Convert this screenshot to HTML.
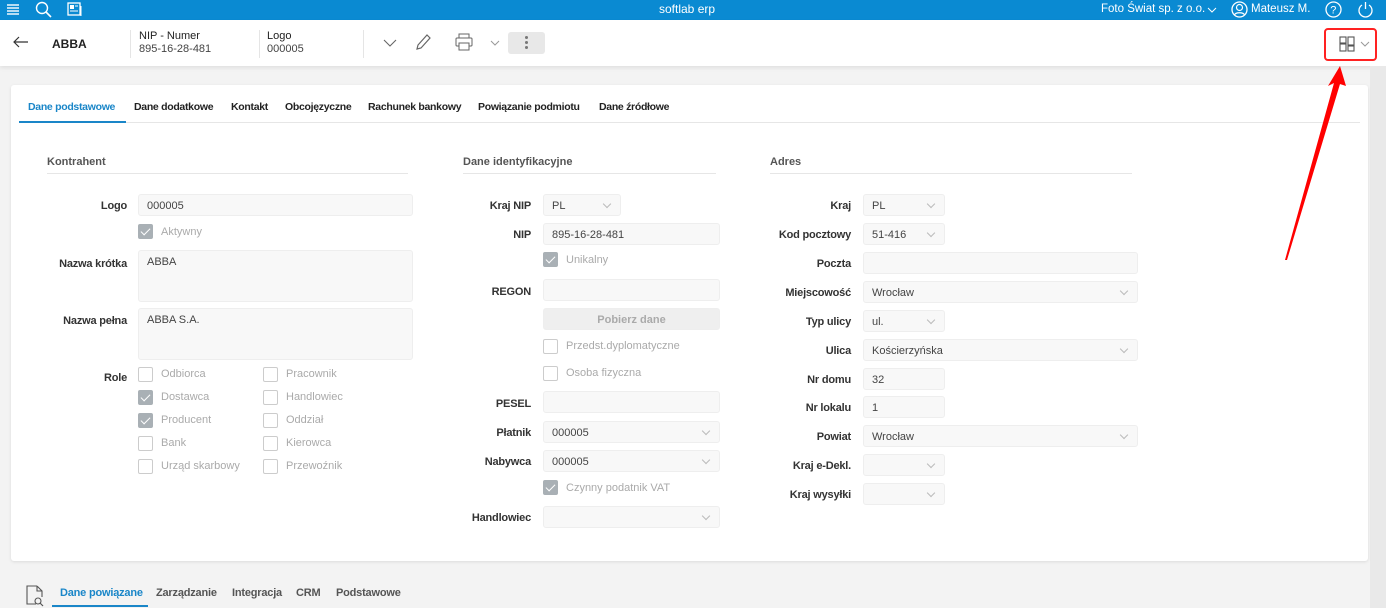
<!DOCTYPE html>
<html><head><meta charset="utf-8"><style>
*{box-sizing:border-box;margin:0;padding:0}
body{width:1386px;height:608px;overflow:hidden;background:#f3f3f3;font-family:"Liberation Sans",sans-serif;position:relative;color:#222}
.a{position:absolute}
.top{left:0;top:0;width:1386px;height:20px;background:#0a8ad2;color:#fff;font-size:12px}
.hdr{left:0;top:20px;width:1386px;height:46px;background:#fff;box-shadow:0 2px 4px rgba(0,0,0,.08)}
.card{left:11px;top:85px;width:1357px;height:476px;background:#fff;border-radius:3px;box-shadow:0 1px 3px rgba(0,0,0,.1)}
.lbl{font-size:11px;font-weight:bold;color:#333;text-align:right;width:120px;letter-spacing:-0.2px}
.in{height:22px;background:#f8f8f8;border:1px solid #eee;border-radius:3px;font-size:11px;color:#444;padding:5px 0 0 8px}
.dd:after{content:"";position:absolute;right:10px;top:6px;width:5px;height:5px;border-right:1px solid #bbb;border-bottom:1px solid #bbb;transform:rotate(45deg)}
.cb{width:15px;height:15px;border:1px solid #ccc;border-radius:2px;background:#fff}
.cb.on{background:#a9b0b5;border-color:#a9b0b5}
.cb.on:after{content:"";position:absolute;left:4px;top:1px;width:4px;height:8px;border-right:1.5px solid #fff;border-bottom:1.5px solid #fff;transform:rotate(45deg)}
.ct{font-size:11px;color:#aaa}
.sec{font-size:11px;font-weight:bold;color:#555}
.line{height:1px;background:#e6e6e6}
.tab{font-size:10.5px;font-weight:bold;color:#222;top:101px;letter-spacing:-0.3px}
.bt{font-size:11px;font-weight:bold;color:#555;top:587px;letter-spacing:-0.2px}
</style></head><body>
<div class="a top">
 <svg class="a" style="left:7px;top:3px" width="12" height="13"><g stroke="#fff" stroke-width="1.4"><line x1="0" y1="2" x2="12" y2="2"/><line x1="0" y1="5" x2="12" y2="5"/><line x1="0" y1="8" x2="12" y2="8"/><line x1="0" y1="11" x2="12" y2="11"/></g></svg>
 <svg class="a" style="left:35px;top:1px" width="18" height="18"><circle cx="7" cy="7" r="5.5" fill="none" stroke="#fff" stroke-width="1.4"/><line x1="11" y1="11" x2="16" y2="16" stroke="#fff" stroke-width="1.6"/></svg>
 <svg class="a" style="left:67px;top:2px" width="16" height="15"><rect x="1" y="1" width="12" height="12" fill="none" stroke="#fff" stroke-width="1.3"/><rect x="3" y="3" width="4" height="4" fill="#fff"/><g stroke="#fff"><line x1="8" y1="4" x2="11" y2="4"/><line x1="3" y1="9" x2="11" y2="9"/><line x1="14" y1="4" x2="14" y2="14"/></g></svg>
 <div class="a" style="left:659px;top:2px">softlab erp</div>
 <div class="a" style="left:1101px;top:3px;font-size:11.5px">Foto Świat sp. z o.o.</div>
 <svg class="a" style="left:1207px;top:7px" width="10" height="6"><path d="M1 1l4 4 4-4" fill="none" stroke="#fff"/></svg>
 <svg class="a" style="left:1231px;top:1px" width="17" height="17"><circle cx="8.5" cy="8.5" r="7.5" fill="none" stroke="#fff" stroke-width="1.3"/><circle cx="8.5" cy="6.5" r="3" fill="none" stroke="#fff" stroke-width="1.2"/><path d="M3.5 14c1-3 9-3 10 0" fill="none" stroke="#fff" stroke-width="1.2"/></svg>
 <div class="a" style="left:1251px;top:3px;font-size:11.5px">Mateusz M.</div>
 <svg class="a" style="left:1325px;top:1px" width="17" height="17"><circle cx="8.5" cy="8.5" r="7.5" fill="none" stroke="#fff" stroke-width="1.3"/><text x="5.3" y="12.5" font-size="11" fill="#fff" font-family="Liberation Sans">?</text></svg>
 <svg class="a" style="left:1357px;top:1px" width="17" height="17"><path d="M5 4A6.5 6.5 0 1 0 12 4" fill="none" stroke="#fff" stroke-width="1.3"/><line x1="8.5" y1="1" x2="8.5" y2="8" stroke="#fff" stroke-width="1.3"/></svg>
</div>
<div class="a hdr">
 <svg class="a" style="left:13px;top:16px" width="16" height="12"><path d="M15 6H1M6 1L1 6l5 5" fill="none" stroke="#333" stroke-width="1.2"/></svg>
 <div class="a" style="left:52px;top:17px;font-size:12px;font-weight:bold">ABBA</div>
 <div class="a" style="left:130px;top:10px;width:1px;height:28px;background:#e5e5e5"></div>
 <div class="a" style="left:139px;top:10px;font-size:11px;line-height:13px">NIP - Numer<br><span style="color:#444">895-16-28-481</span></div>
 <div class="a" style="left:259px;top:10px;width:1px;height:28px;background:#e5e5e5"></div>
 <div class="a" style="left:267px;top:10px;font-size:11px;line-height:13px">Logo<br><span style="color:#444">000005</span></div>
 <div class="a" style="left:363px;top:10px;width:1px;height:28px;background:#e5e5e5"></div>
 <svg class="a" style="left:383px;top:19px" width="14" height="8"><path d="M1 1l6 6 6-6" fill="none" stroke="#666" stroke-width="1.1"/></svg>
 <svg class="a" style="left:414px;top:13px" width="18" height="18"><path d="M3 16l1-4L13 2l3 3-9 10z" fill="none" stroke="#666" stroke-width="1.2"/></svg>
 <svg class="a" style="left:455px;top:13px" width="18" height="18"><rect x="4" y="1" width="10" height="4" fill="none" stroke="#666"/><rect x="1" y="5" width="16" height="8" rx="1" fill="none" stroke="#666"/><rect x="4" y="10" width="10" height="7" fill="#fff" stroke="#666"/></svg>
 <svg class="a" style="left:490px;top:20px" width="10" height="6"><path d="M1 1l4 4 4-4" fill="none" stroke="#999"/></svg>
 <div class="a" style="left:508px;top:12px;width:37px;height:22px;background:#e8e8e8;border-radius:3px"></div>
 <div class="a" style="left:525px;top:16px;width:3px;height:3px;border-radius:2px;background:#777;box-shadow:0 5px 0 #777,0 10px 0 #777"></div>
 <div class="a" style="left:1324px;top:8px;width:53px;height:33px;border:2px solid #f22;border-radius:4px"></div>
 <svg class="a" style="left:1339px;top:16px" width="16" height="16"><g fill="none" stroke="#555" stroke-width="1.1"><rect x="1" y="1" width="6" height="6"/><rect x="1" y="8" width="6" height="7"/><rect x="9" y="1" width="6" height="8"/><rect x="9" y="10" width="6" height="5"/></g></svg>
 <svg class="a" style="left:1360px;top:21px" width="10" height="6"><path d="M1 1l4 4 4-4" fill="none" stroke="#999"/></svg>
</div>
<div class="a" style="left:1370px;top:66px;width:16px;height:542px;background:#e9e9e9"></div>
<div class="a card"></div>
<div class="a tab" style="left:28px;color:#1a86c8">Dane podstawowe</div>
<div class="a tab" style="left:134px">Dane dodatkowe</div>
<div class="a tab" style="left:231px">Kontakt</div>
<div class="a tab" style="left:285px">Obcojęzyczne</div>
<div class="a tab" style="left:368px">Rachunek bankowy</div>
<div class="a tab" style="left:478px">Powiązanie podmiotu</div>
<div class="a tab" style="left:599px">Dane źródłowe</div>
<div class="a line" style="left:19px;top:122px;width:1341px"></div>
<div class="a" style="left:19px;top:121px;width:107px;height:2px;background:#1a86c8"></div>

<div class="a sec" style="left:47px;top:156px">Kontrahent</div><div class="a line" style="left:47px;top:173px;width:361px"></div>
<div class="a sec" style="left:463px;top:156px">Dane identyfikacyjne</div><div class="a line" style="left:463px;top:173px;width:253px"></div>
<div class="a sec" style="left:770px;top:156px">Adres</div><div class="a line" style="left:770px;top:173px;width:362px"></div>

<!-- col1 -->
<div class="a lbl" style="left:7px;top:200px">Logo</div><div class="a in" style="left:138px;top:194px;width:275px">000005</div>
<div class="a cb on" style="left:138px;top:224px"></div><div class="a ct" style="left:161px;top:226px">Aktywny</div>
<div class="a lbl" style="left:7px;top:258px">Nazwa krótka</div><div class="a in" style="left:138px;top:250px;width:275px;height:52px">ABBA</div>
<div class="a lbl" style="left:7px;top:315px">Nazwa pełna</div><div class="a in" style="left:138px;top:308px;width:275px;height:52px">ABBA S.A.</div>
<div class="a lbl" style="left:7px;top:372px">Role</div>
<div class="a cb" style="left:138px;top:367px"></div><div class="a ct" style="left:161px;top:368px">Odbiorca</div>
<div class="a cb on" style="left:138px;top:390px"></div><div class="a ct" style="left:161px;top:391px">Dostawca</div>
<div class="a cb on" style="left:138px;top:413px"></div><div class="a ct" style="left:161px;top:414px">Producent</div>
<div class="a cb" style="left:138px;top:436px"></div><div class="a ct" style="left:161px;top:437px">Bank</div>
<div class="a cb" style="left:138px;top:459px"></div><div class="a ct" style="left:161px;top:460px">Urząd skarbowy</div>
<div class="a cb" style="left:263px;top:367px"></div><div class="a ct" style="left:286px;top:368px">Pracownik</div>
<div class="a cb" style="left:263px;top:390px"></div><div class="a ct" style="left:286px;top:391px">Handlowiec</div>
<div class="a cb" style="left:263px;top:413px"></div><div class="a ct" style="left:286px;top:414px">Oddział</div>
<div class="a cb" style="left:263px;top:436px"></div><div class="a ct" style="left:286px;top:437px">Kierowca</div>
<div class="a cb" style="left:263px;top:459px"></div><div class="a ct" style="left:286px;top:460px">Przewoźnik</div>

<!-- col2 -->
<div class="a lbl" style="left:411px;top:200px">Kraj NIP</div><div class="a in dd" style="left:543px;top:194px;width:78px">PL</div>
<div class="a lbl" style="left:411px;top:229px">NIP</div><div class="a in" style="left:543px;top:223px;width:177px">895-16-28-481</div>
<div class="a cb on" style="left:543px;top:252px"></div><div class="a ct" style="left:566px;top:254px">Unikalny</div>
<div class="a lbl" style="left:411px;top:286px">REGON</div><div class="a in" style="left:543px;top:279px;width:177px"></div>
<div class="a in" style="left:543px;top:308px;width:177px;background:#efefef;color:#aaa;text-align:center;padding-left:0;font-weight:bold">Pobierz dane</div>
<div class="a cb" style="left:543px;top:339px"></div><div class="a ct" style="left:566px;top:340px">Przedst.dyplomatyczne</div>
<div class="a cb" style="left:543px;top:366px"></div><div class="a ct" style="left:566px;top:367px">Osoba fizyczna</div>
<div class="a lbl" style="left:411px;top:398px">PESEL</div><div class="a in" style="left:543px;top:391px;width:177px"></div>
<div class="a lbl" style="left:411px;top:427px">Płatnik</div><div class="a in dd" style="left:543px;top:421px;width:177px">000005</div>
<div class="a lbl" style="left:411px;top:456px">Nabywca</div><div class="a in dd" style="left:543px;top:450px;width:177px">000005</div>
<div class="a cb on" style="left:543px;top:480px"></div><div class="a ct" style="left:566px;top:482px">Czynny podatnik VAT</div>
<div class="a lbl" style="left:411px;top:512px">Handlowiec</div><div class="a in dd" style="left:543px;top:506px;width:177px"></div>

<!-- col3 -->
<div class="a lbl" style="left:731px;top:200px">Kraj</div><div class="a in dd" style="left:863px;top:194px;width:82px">PL</div>
<div class="a lbl" style="left:731px;top:229px">Kod pocztowy</div><div class="a in dd" style="left:863px;top:223px;width:82px">51-416</div>
<div class="a lbl" style="left:731px;top:258px">Poczta</div><div class="a in" style="left:863px;top:252px;width:275px"></div>
<div class="a lbl" style="left:731px;top:287px">Miejscowość</div><div class="a in dd" style="left:863px;top:281px;width:275px">Wrocław</div>
<div class="a lbl" style="left:731px;top:316px">Typ ulicy</div><div class="a in dd" style="left:863px;top:310px;width:82px">ul.</div>
<div class="a lbl" style="left:731px;top:345px">Ulica</div><div class="a in dd" style="left:863px;top:339px;width:275px">Kościerzyńska</div>
<div class="a lbl" style="left:731px;top:374px">Nr domu</div><div class="a in" style="left:863px;top:368px;width:82px">32</div>
<div class="a lbl" style="left:731px;top:402px">Nr lokalu</div><div class="a in" style="left:863px;top:396px;width:82px">1</div>
<div class="a lbl" style="left:731px;top:431px">Powiat</div><div class="a in dd" style="left:863px;top:425px;width:275px">Wrocław</div>
<div class="a lbl" style="left:731px;top:460px">Kraj e-Dekl.</div><div class="a in dd" style="left:863px;top:454px;width:82px"></div>
<div class="a lbl" style="left:731px;top:489px">Kraj wysyłki</div><div class="a in dd" style="left:863px;top:483px;width:82px"></div>

<!-- bottom -->
<svg class="a" style="left:26px;top:585px" width="18" height="22"><path d="M11 1H1v18h9M11 1l5 5v6M11 1v5h5" fill="none" stroke="#555" stroke-width="1.1"/><circle cx="12" cy="16" r="3" fill="none" stroke="#555" stroke-width="1.1"/><line x1="14" y1="18" x2="17" y2="21" stroke="#555" stroke-width="1.2"/></svg>
<div class="a bt" style="left:60px;color:#1a86c8">Dane powiązane</div>
<div class="a" style="left:52px;top:605px;width:96px;height:2px;background:#1a86c8"></div>
<div class="a bt" style="left:156px">Zarządzanie</div>
<div class="a bt" style="left:232px">Integracja</div>
<div class="a bt" style="left:296px">CRM</div>
<div class="a bt" style="left:336px">Podstawowe</div>

<svg class="a" style="left:0;top:0" width="1386" height="608"><polygon points="1340,66 1346,86 1340,84 1287,260 1285,260 1334,83 1328,86" fill="#f00"/></svg>
</body></html>
